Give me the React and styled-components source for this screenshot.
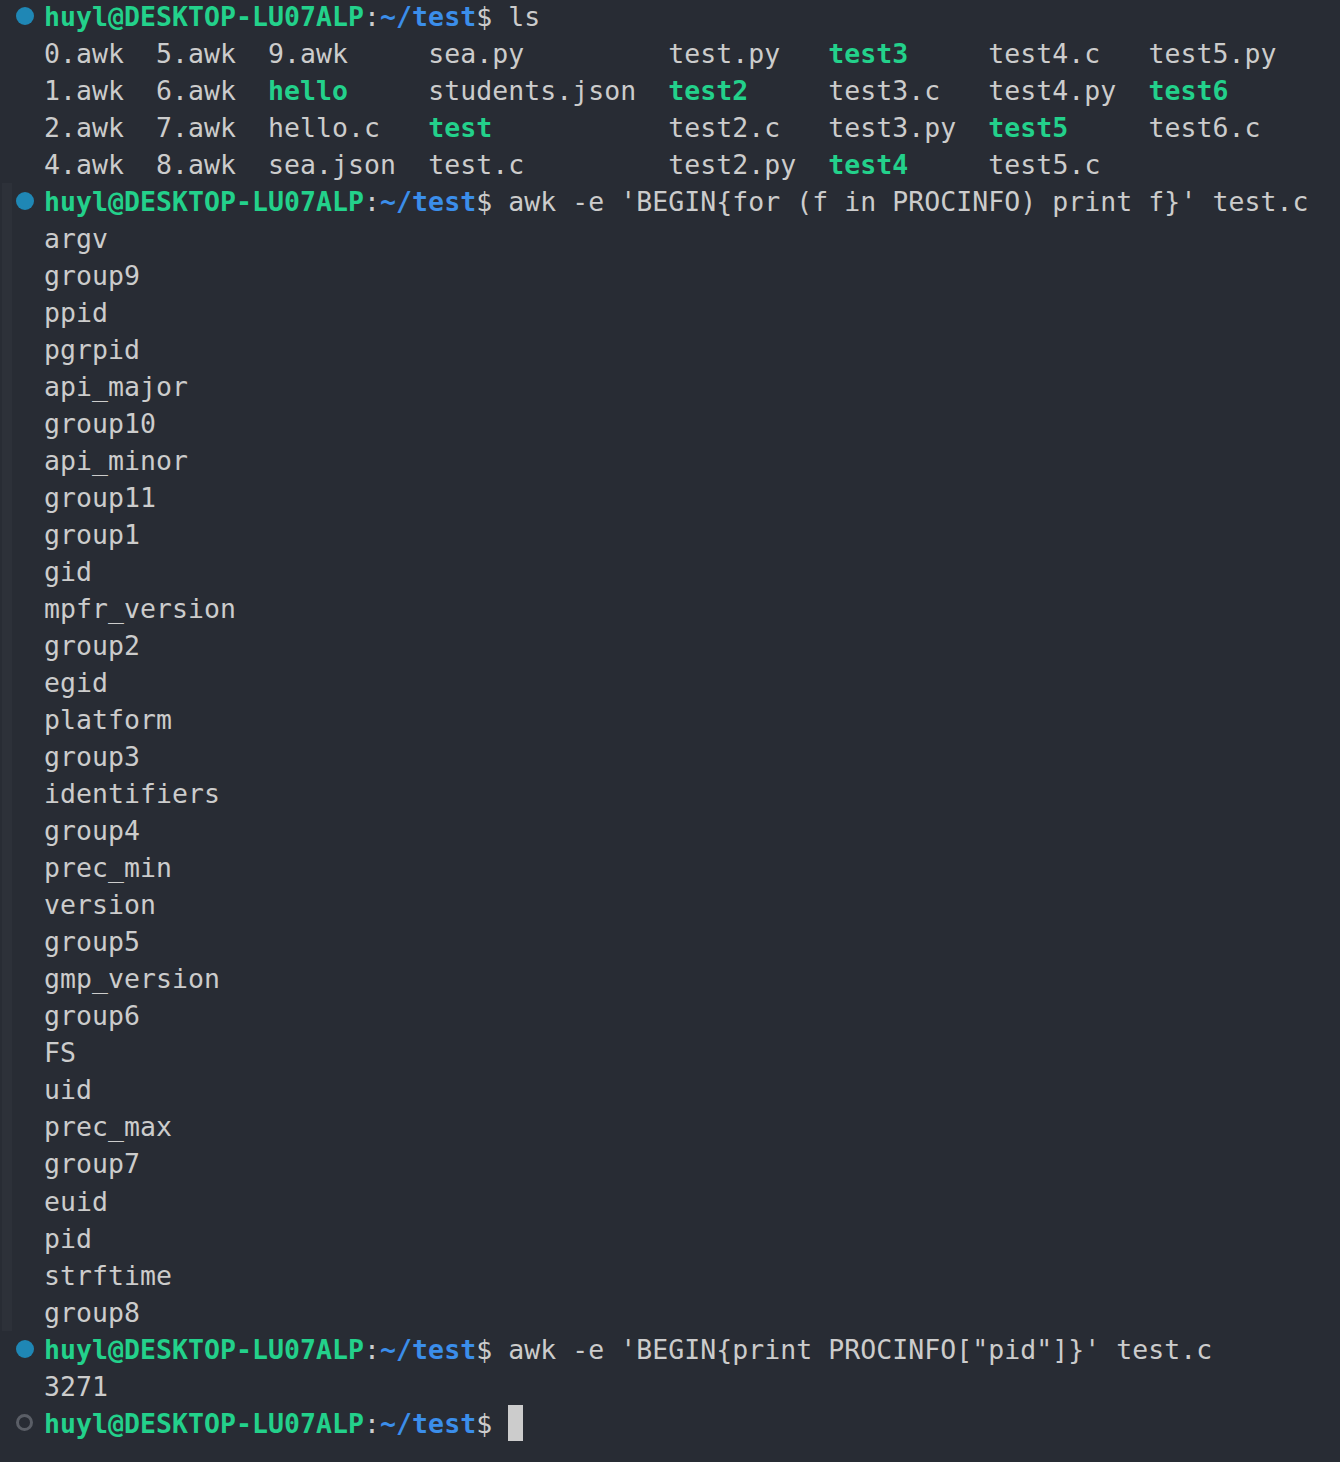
import React from "react";
import styled, { createGlobalStyle } from "styled-components";

const GlobalStyle = createGlobalStyle`
  html, body {
    margin: 0;
    padding: 0;
    background: #282c34;
  }
`;

const LS_ROWS = [
  [["0.awk"], ["5.awk"], ["9.awk"], ["sea.py"], ["test.py"], ["test3", true], ["test4.c"], ["test5.py"]],
  [["1.awk"], ["6.awk"], ["hello", true], ["students.json"], ["test2", true], ["test3.c"], ["test4.py"], ["test6", true]],
  [["2.awk"], ["7.awk"], ["hello.c"], ["test", true], ["test2.c"], ["test3.py"], ["test5", true], ["test6.c"]],
  [["4.awk"], ["8.awk"], ["sea.json"], ["test.c"], ["test2.py"], ["test4", true], ["test5.c"]]
];
const COL_WIDTHS = [7, 7, 10, 15, 10, 10, 10, 10];

const PROCINFO = [
  "argv", "group9", "ppid", "pgrpid", "api_major", "group10", "api_minor",
  "group11", "group1", "gid", "mpfr_version", "group2", "egid", "platform",
  "group3", "identifiers", "group4", "prec_min", "version", "group5",
  "gmp_version", "group6", "FS", "uid", "prec_max", "group7", "euid", "pid",
  "strftime", "group8"
];

const Terminal = styled.div`
  min-height: 1462px;
  background: #282c34;
  color: #cccccc;
  font-family: "DejaVu Sans Mono", "Liberation Mono", monospace;
  font-size: 26.5px;
  letter-spacing: 0.05px;
  line-height: 37.03px;
  margin-top: -2px;
  overflow: hidden;
`;

const Block = styled.div`
  background: ${p =>
    p.$hover
      ? "linear-gradient(to right, transparent 2px, #2d3139 2px, #2d3139 12px, transparent 12px)"
      : "none"};
`;

const Line = styled.div`
  display: flex;
  height: 37.03px;
`;

const Gutter = styled.div`
  width: 44px;
  flex: none;
  display: flex;
  align-items: center;
  padding-left: 16px;
  padding-bottom: ${p => (p.$idle ? "0" : "1px")};
  box-sizing: border-box;
`;

const Marker = styled.span`
  display: block;
  box-sizing: border-box;
  width: ${p => (p.$idle ? "17px" : "18px")};
  height: ${p => (p.$idle ? "17px" : "18px")};
  border-radius: 50%;
  background: ${p => (p.$idle ? "transparent" : "#1f87b5")};
  border: ${p => (p.$idle ? "3px solid #5a5e66" : "none")};
`;

const Text = styled.pre`
  margin: 0;
  font: inherit;
  letter-spacing: inherit;
  white-space: pre;
`;

const Span = styled.span`
  color: ${p => p.$color || "inherit"};
  font-weight: ${p => (p.$bold ? "bold" : "normal")};
`;

const Cursor = styled.span`
  display: inline-block;
  width: 15px;
  height: 36px;
  background: #cccccc;
  vertical-align: middle;
  margin-top: -4px;
`;

const Prompt = () => (
  <>
    <Span $color="#23d18b" $bold>huyl@DESKTOP-LU07ALP</Span>
    <Span>:</Span>
    <Span $color="#3b8eea" $bold>~/test</Span>
    <Span>$ </Span>
  </>
);

const CommandLine = ({ idle, children }) => (
  <Line>
    <Gutter>
      <Marker $idle={idle} />
    </Gutter>
    <Text>
      <Prompt />
      {children}
    </Text>
  </Line>
);

const OutputLine = ({ children }) => (
  <Line>
    <Gutter />
    <Text>{children}</Text>
  </Line>
);

const LsRow = ({ row }) => (
  <OutputLine>
    {row.map(([name, exec], i) => {
      const pad = i < row.length - 1 ? " ".repeat(COL_WIDTHS[i] - name.length) : "";
      return (
        <React.Fragment key={i}>
          <Span $color={exec ? "#23d18b" : undefined} $bold={exec}>
            {name}
          </Span>
          {pad}
        </React.Fragment>
      );
    })}
  </OutputLine>
);

export default function App() {
  return (
    <>
      <GlobalStyle />
      <Terminal>
        <Block>
          <CommandLine>ls</CommandLine>
          {LS_ROWS.map((row, i) => (
            <LsRow key={i} row={row} />
          ))}
        </Block>
        <Block $hover>
          <CommandLine>awk -e 'BEGIN{"{"}for (f in PROCINFO) print f{"}"}' test.c</CommandLine>
          {PROCINFO.map(name => (
            <OutputLine key={name}>{name}</OutputLine>
          ))}
        </Block>
        <Block>
          <CommandLine>awk -e 'BEGIN{"{"}print PROCINFO["pid"]{"}"}' test.c</CommandLine>
          <OutputLine>3271</OutputLine>
        </Block>
        <Block>
          <CommandLine idle>
            <Cursor />
          </CommandLine>
        </Block>
      </Terminal>
    </>
  );
}
